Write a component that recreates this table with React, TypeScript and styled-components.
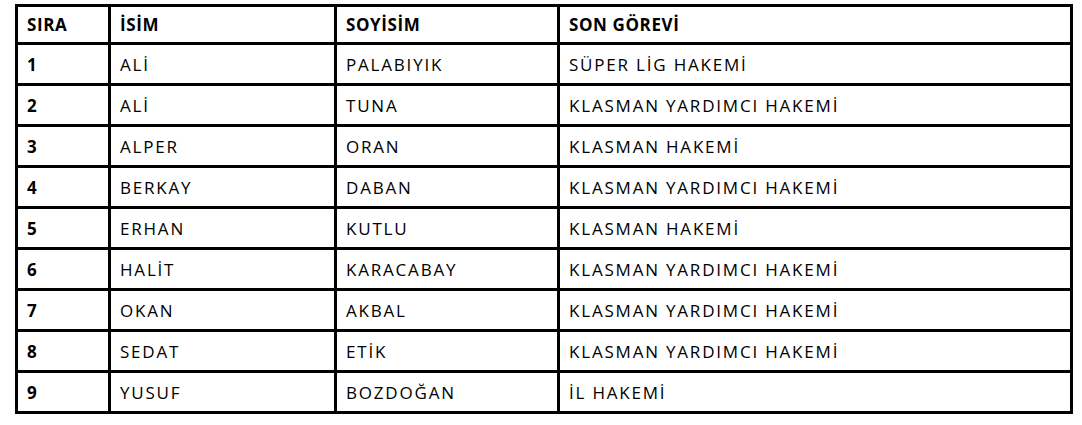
import styled, { createGlobalStyle } from "styled-components";

const GlobalStyle = createGlobalStyle`
  html, body {
    margin: 0;
    padding: 0;
    background: #ffffff;
  }
  body {
    font-family: "Open Sans", "Noto Sans", sans-serif;
    color: #000000;
  }
`;

type Referee = {
  no: number;
  name: string;
  surname: string;
  duty: string;
};

const referees: Referee[] = [
  { no: 1, name: "ALİ", surname: "PALABIYIK", duty: "SÜPER LİG HAKEMİ" },
  { no: 2, name: "ALİ", surname: "TUNA", duty: "KLASMAN YARDIMCI HAKEMİ" },
  { no: 3, name: "ALPER", surname: "ORAN", duty: "KLASMAN HAKEMİ" },
  { no: 4, name: "BERKAY", surname: "DABAN", duty: "KLASMAN YARDIMCI HAKEMİ" },
  { no: 5, name: "ERHAN", surname: "KUTLU", duty: "KLASMAN HAKEMİ" },
  { no: 6, name: "HALİT", surname: "KARACABAY", duty: "KLASMAN YARDIMCI HAKEMİ" },
  { no: 7, name: "OKAN", surname: "AKBAL", duty: "KLASMAN YARDIMCI HAKEMİ" },
  { no: 8, name: "SEDAT", surname: "ETİK", duty: "KLASMAN YARDIMCI HAKEMİ" },
  { no: 9, name: "YUSUF", surname: "BOZDOĞAN", duty: "İL HAKEMİ" },
];

export default function App() {
  return (
    <>
      <GlobalStyle />
      <Page>
        <Table>
          <colgroup>
            <col style={{ width: 90 }} />
            <col style={{ width: 223 }} />
            <col style={{ width: 220 }} />
            <col style={{ width: 510 }} />
          </colgroup>
          <thead>
            <tr>
              <HeadCell>SIRA</HeadCell>
              <HeadCell>İSİM</HeadCell>
              <HeadCell>SOYİSİM</HeadCell>
              <HeadCell>SON GÖREVİ</HeadCell>
            </tr>
          </thead>
          <tbody>
            {referees.map((r) => (
              <tr key={r.no}>
                <Cell $bold>{r.no}</Cell>
                <Cell>{r.name}</Cell>
                <Cell>{r.surname}</Cell>
                <Cell>{r.duty}</Cell>
              </tr>
            ))}
          </tbody>
        </Table>
      </Page>
    </>
  );
}

const Page = styled.div`
  padding: 4px 0 0 15px;
`;

const Table = styled.table`
  width: 1058px;
  table-layout: fixed;
  border-collapse: separate;
  border-spacing: 3px;
  background: #000000;
  font-size: 17px;
  letter-spacing: 1.8px;
`;

const HeadCell = styled.th`
  height: 35px;
  padding: 0 9px;
  background: #ffffff;
  text-align: left;
  font-weight: 700;
  letter-spacing: 0.6px;
  vertical-align: middle;
  white-space: nowrap;
`;

const Cell = styled.td<{ $bold?: boolean }>`
  height: 38px;
  padding: 0 9px;
  background: #ffffff;
  font-weight: ${(p) => (p.$bold ? 700 : 500)};
  vertical-align: middle;
  white-space: nowrap;
`;
